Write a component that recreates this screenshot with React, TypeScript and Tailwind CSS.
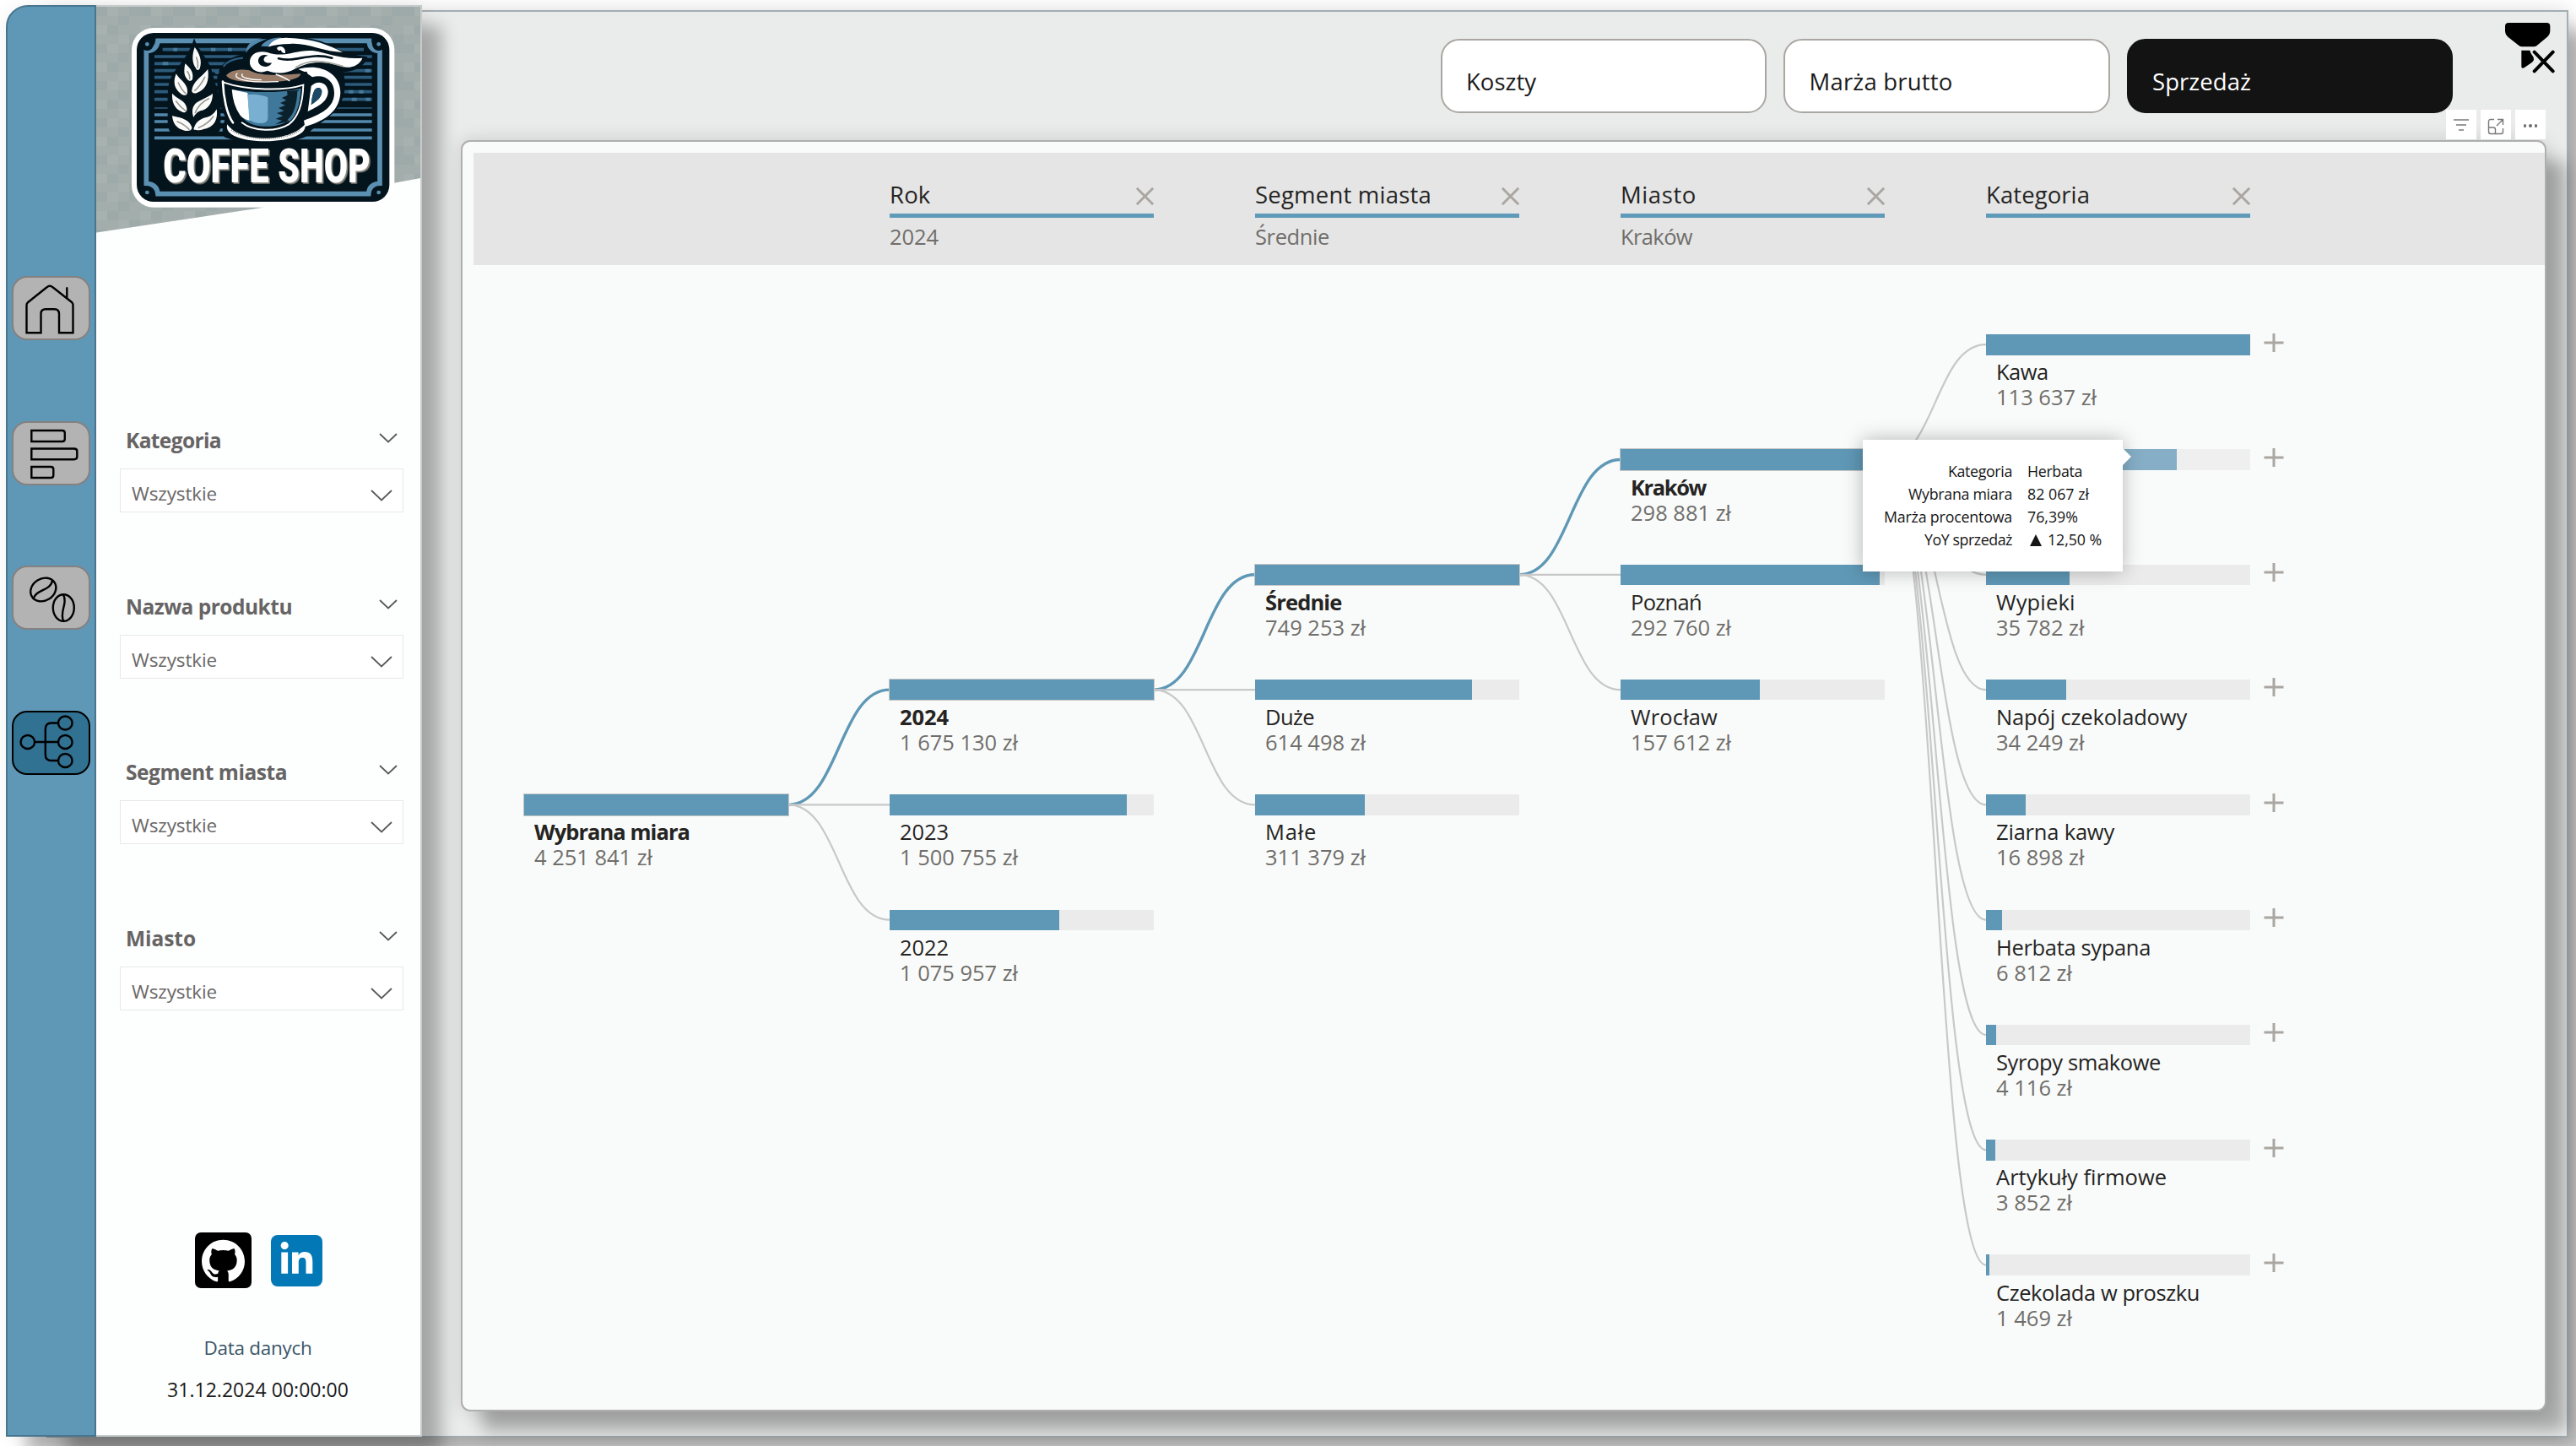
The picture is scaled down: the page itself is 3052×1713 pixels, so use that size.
import React from "react";
import { SiGithub } from "react-icons/si";
import { FaLinkedinIn } from "react-icons/fa";

/* ---------- fitted text ---------- */

const FAMILY = '"Open Sans", "Noto Sans", sans-serif';
let measureCtx: CanvasRenderingContext2D | null = null;

/** Letter spacing that makes `text` take `width` pixels at the given size. */
function tracking(text: string, size: number, weight: number, width: number) {
  if (!measureCtx) measureCtx = document.createElement("canvas").getContext("2d");
  if (!measureCtx) return 0;
  measureCtx.font = `${weight} ${size}px ${FAMILY}`;
  return (width - measureCtx.measureText(text).width) / text.length;
}

type FitProps = { text: string; size: number; width: number; bold?: boolean; className?: string };

function Fit({ text, size, width, bold = false, className = "" }: FitProps) {
  const weight = bold ? 700 : 400;
  return (
    <span
      className={`whitespace-nowrap ${className}`}
      style={{ fontSize: size, fontWeight: weight, letterSpacing: tracking(text, size, weight, width) }}
    >
      {text}
    </span>
  );
}

/* ---------- logo ---------- */

const STRIPES = [92, 117, 142, 167, 191, 216, 242, 269, 300, 324, 348, 378, 406];

function Leaf({ d, shade }: { d: string; shade: string }) {
  return (
    <>
      <path d={d} fill="#fbfbfa" />
      <path d={shade} fill="none" stroke="#9a9a95" strokeWidth="5" strokeLinecap="round" />
    </>
  );
}

function Logo() {
  return (
    <svg viewBox="0 0 972 666" className="block h-[222px] w-[324px]">
      <rect x="18" y="15" width="934" height="638" rx="78" fill="#fff" />
      <rect x="36" y="33" width="898" height="600" rx="60" fill="#04141d" />
      <path
        d="M111 61H862Q862 96 900 98V568Q862 570 860 605H111Q108 570 70 568V98Q108 96 111 61Z"
        fill="none"
        stroke="#5b90b2"
        strokeWidth="17"
      />
      <g fill="#04141d" stroke="#04141d" strokeWidth="6">
        <circle cx="73" cy="73" r="20" />
        <circle cx="896" cy="73" r="20" />
        <circle cx="73" cy="600" r="20" />
        <circle cx="896" cy="600" r="20" />
      </g>
      <g fill="#5b90b2">
        <circle cx="73" cy="73" r="7" />
        <circle cx="896" cy="73" r="7" />
        <circle cx="73" cy="600" r="7" />
        <circle cx="896" cy="600" r="7" />
      </g>
      <g strokeWidth="11">
        {STRIPES.map((y, i) => (
          <path
            key={y}
            d={i === 0 ? `M128 ${y}H843` : `M99 ${y}H872`}
            stroke={i > 8 ? "#5389ad" : "#2c5b7c"}
            strokeWidth={i === 8 ? 4 : 11}
          />
        ))}
      </g>
      <g fill="#5389ad" opacity="0.7">
        <path d="M166 86h14v12h-14zM300 86h16v12h-16zM360 86h14v12h-14zM128 136h20v12h-20zM800 136h16v12h-16zM848 161h18v12h-18zM790 236h16v12h-16zM826 236h16v12h-16zM800 263h18v12h-18zM850 263h16v12h-16z" />
      </g>

      {/* dark halo behind the wheat and the cup */}
      <path d="M240 52C256 100 298 132 306 180C316 220 330 250 334 300V372Q330 392 300 394H170Q146 388 146 350V280C146 220 150 200 170 170C196 140 228 96 240 52Z" fill="#04141d" />
      <path d="M322 190C326 150 360 118 420 108C430 70 470 50 510 44C590 40 690 50 740 86C790 112 830 112 856 118C846 158 800 172 770 172C790 250 760 300 714 336C680 360 650 380 640 400C580 432 420 432 350 404C330 390 350 350 350 330C326 290 322 230 322 190Z" fill="#04141d" />
      <path d="M424 104C424 80 440 62 470 55H500C470 64 440 80 424 104Z" fill="#5389ad" />
      <path d="M478 80C490 60 520 48 550 50L510 82Z" fill="#5389ad" />
      <path d="M560 52C620 50 690 60 724 84Z" fill="#5389ad" />
      <path d="M344 152C358 134 384 124 414 122" fill="none" stroke="#2c5b7c" strokeWidth="7" />
      <circle cx="321" cy="172" r="8" fill="#2c5b7c" />

      {/* wheat */}
      <Leaf d="M242 84C258 104 270 132 260 160C254 168 250 166 246 158C232 140 232 110 242 84Z" shade="M248 120Q256 140 252 156" />
      <Leaf d="M208 142C224 156 240 172 234 198C230 206 220 204 216 198C202 184 204 164 208 142Z" shade="M216 170Q226 184 224 196" />
      <Leaf d="M289 162C294 200 286 232 250 246C240 250 230 246 232 236C236 206 264 192 289 162Z" shade="M278 190Q262 222 242 238" />
      <Leaf d="M176 178C190 202 220 214 216 246C214 258 200 256 192 248C170 232 164 208 176 178Z" shade="M184 210Q194 234 210 248" />
      <Leaf d="M306 248C306 282 290 304 262 310C250 314 238 330 238 334C230 310 234 292 250 280C268 268 290 262 306 248Z" shade="M292 266Q258 282 244 316" />
      <Leaf d="M162 248C176 266 210 272 214 300C216 314 208 320 194 312C170 302 160 276 162 248Z" shade="M176 276Q192 298 210 310" />
      <Leaf d="M320 304C326 340 310 368 276 374C262 380 244 380 238 376C244 352 258 340 280 334C300 330 312 318 320 304Z" shade="M308 330Q290 356 256 370" />
      <Leaf d="M162 328C186 334 220 336 232 368C234 378 220 384 206 380C176 374 164 352 162 328Z" shade="M180 348Q206 358 222 376" />

      {/* saucer */}
      <path d="M358 358C400 424 580 424 634 358C644 392 580 418 494 418C410 418 346 396 358 358Z" fill="#fff" />
      <path d="M372 378C430 420 570 418 618 376" fill="none" stroke="#7c7f7e" strokeWidth="5" strokeDasharray="3 4" />
      <path d="M372 352C420 400 570 400 616 352" fill="none" stroke="#04141d" strokeWidth="16" />

      {/* handle */}
      <path
        fillRule="evenodd"
        d="M610 162C680 140 760 170 760 246C756 320 690 350 634 366L630 344C690 322 738 300 738 246C738 200 700 178 660 190L634 172Z"
        fill="#fff"
      />
      <path
        fillRule="evenodd"
        d="M656 222C676 200 712 206 716 240C716 280 676 296 644 312ZM668 236C660 250 658 270 656 288C676 276 694 262 694 240C692 226 676 224 668 236Z"
        fill="#fff"
      />
      <path d="M668 236C660 250 658 270 656 288C676 276 694 262 694 240C692 226 676 224 668 236Z" fill="#1c4a66" />

      {/* cup */}
      <path d="M338 202C420 240 560 246 640 204C638 270 628 330 586 366C540 392 436 394 396 362C352 330 338 262 338 202Z" fill="#04141d" />
      <path d="M342 206C344 262 356 322 378 352" fill="none" stroke="#fff" strokeWidth="8" strokeLinecap="round" />
      <path d="M342 208C430 238 560 240 628 218C626 290 606 336 576 358C530 386 450 384 410 352" fill="none" stroke="#fff" strokeWidth="6" strokeLinecap="round" />
      <path d="M376 234C450 248 560 246 620 230C616 290 602 328 572 348C530 372 458 372 422 344C390 316 380 280 376 234Z" fill="#3f789b" />
      <path d="M374 234L430 246L438 344Q416 340 404 326Q378 290 374 234Z" fill="#fff" />
      <path d="M430 252Q470 248 502 262V338Q500 356 470 354Q440 350 436 340Z" fill="#79afd0" />
      <path d="M570 240L612 236C610 290 596 330 566 350L528 358L552 344L530 338L556 328L534 318L560 310L540 300L564 290L546 282L568 272L552 264L572 254Z" fill="#04141d" opacity="0.88" />
      <path d="M612 240C610 290 600 324 576 344" fill="none" stroke="#3f789b" strokeWidth="10" />

      {/* coffee */}
      <path d="M344 182C356 160 400 150 440 152C480 190 580 180 640 170C650 186 636 196 620 202C560 222 430 222 380 208C360 202 346 194 344 182Z" fill="#04141d" />
      <path d="M354 184C370 164 410 160 436 166C480 190 560 182 618 178C620 194 580 206 500 208C430 210 366 206 354 184Z" fill="#987c68" />
      <path d="M394 176C370 196 430 212 540 206M412 178C400 192 440 200 480 200M530 180Q560 190 580 204" fill="none" stroke="#fff" strokeWidth="4" />

      {/* steam */}
      <path d="M520 148C500 186 442 176 438 140C436 106 470 94 500 102C560 124 600 92 660 96C720 104 760 128 838 122C830 146 800 160 770 154C700 130 650 134 600 160C560 184 520 176 492 164Z" fill="#fff" />
      <path d="M516 140C504 160 474 156 468 136C466 116 484 106 504 114C486 114 482 134 496 138C506 142 514 138 516 140Z" fill="#04141d" />
      <path d="M504 82C520 54 550 46 590 52C660 56 720 76 768 102C700 100 640 66 580 72C550 72 524 76 504 82Z" fill="#fff" />
      <path d="M534 86C548 74 566 86 564 104C556 108 550 100 548 94C544 98 536 96 534 86Z" fill="#fff" />
      <path d="M540 124C600 140 650 100 730 122" fill="none" stroke="#04141d" strokeWidth="8" strokeLinecap="round" />
      <path d="M600 156C650 124 700 130 770 152" fill="none" stroke="#a9a9a2" strokeWidth="5" />

      <g
        fill="#fff"
        fontFamily='"Roboto", "Liberation Sans", sans-serif'
        fontWeight="900"
        fontSize="168"
        className="drop-shadow-[5px_5px_0_#8f8d82]"
      >
        <text x="130" y="565" textLength="376" lengthAdjust="spacingAndGlyphs">COFFE</text>
        <text x="538" y="565" textLength="328" lengthAdjust="spacingAndGlyphs">SHOP</text>
      </g>
    </svg>
  );
}

function LogoBackdrop() {
  return (
    <svg viewBox="0 0 384 270" className="absolute left-0 top-0 h-[270px] w-[384px]">
      <defs>
        <pattern id="weave" width="52" height="44" patternUnits="userSpaceOnUse">
          <path d="M0 0h13v11H0zM26 11h13v11H26zM13 22h13v11H13zM39 33h13v11H39zM39 0h13v11H39z" fill="#8f9e9e" opacity="0.25" />
          <path d="M13 0h13v11H13zM0 22h13v11H0zM26 33h13v11H26z" fill="#b7bdb8" opacity="0.25" />
        </pattern>
      </defs>
      <path d="M0 0H384V203L193 238.500L0 267.500Z" fill="#a2adac" />
      <path d="M0 0H384V203L193 238.500L0 267.500Z" fill="url(#weave)" />
    </svg>
  );
}

/* ---------- navigation rail ---------- */

const navIcons: { id: string; active?: boolean; icon: React.ReactNode }[] = [
  {
    id: "home",
    icon: (
      <g transform="translate(-0.300 -2.200)">
        <path d="M17 67.5V34.5Q17 32.5 18.8 31.2L41 13.5Q44.5 10.5 48 13.5L70.5 31.2Q72 32.5 72 34.5V67.5H55.5V45Q55.5 39.5 50 39.5H39.5Q34 39.5 34 45V67.5Z" />
        <path d="M64.8 13.5V26" />
      </g>
    ),
  },
  {
    id: "bars",
    icon: (
      <>
        <path d="M22.5 9H59Q62 9 62 12V19Q62 22 59 22H22.5Z" />
        <path d="M22.5 30.500H73Q76.500 30.500 76.500 33.500V40Q76.500 43.200 73 43.200H22.500Z" />
        <path d="M22.5 52H45.500Q48.500 52 48.500 55V62Q48.500 65 45.500 65H22.500Z" />
      </>
    ),
  },
  {
    id: "beans",
    icon: (
      <>
        <ellipse cx="36.500" cy="26.500" rx="15.800" ry="13" transform="rotate(-32 36.500 26.500)" />
        <path d="M24.500 38C28 25 45 29 47.500 15" />
        <ellipse cx="60.500" cy="48" rx="12.500" ry="15.800" />
        <path d="M60 32C66 43 55 53 60.500 64" />
      </>
    ),
  },
  {
    id: "tree",
    active: true,
    icon: (
      <>
        <ellipse cx="18" cy="35" rx="8.300" ry="8" />
        <ellipse cx="62.500" cy="12.500" rx="8.300" ry="8" />
        <ellipse cx="62.500" cy="35" rx="8.300" ry="8" />
        <ellipse cx="62.500" cy="57" rx="8.300" ry="8" />
        <path d="M26.500 35H54M54 12.500H46Q39 12.500 39 20V50Q39 57 46 57H54" />
      </>
    ),
  },
];

function NavRail() {
  return (
    <nav className="flex w-[107px] shrink-0 flex-col gap-[95.500px] rounded-tl-[26px] border-2 border-[#48768f] bg-[#5f98b6] pl-[5px] pt-[319px]">
      {navIcons.map(({ id, active, icon }) => (
        <div
          key={id}
          className={`h-[76px] w-[93px] rounded-[18px] border-2 ${active ? "border-black bg-[#317191]" : "border-[#858180] bg-[#b3b3b3]"}`}
        >
          <svg viewBox="1.200 0 89 72" className="h-[72px] w-[89px]" fill="none" stroke="#000" strokeWidth="2.400">
            {icon}
          </svg>
        </div>
      ))}
    </nav>
  );
}

/* ---------- filter panel ---------- */

const filters = [
  { name: "Kategoria", width: 113 },
  { name: "Nazwa produktu", width: 197 },
  { name: "Segment miasta", width: 191 },
  { name: "Miasto", width: 83 },
];

function FilterPanel() {
  return (
    <aside className="relative flex w-[386px] shrink-0 flex-col border-2 border-l-0 border-[#c9cbcb] bg-[#fdfefe]">
      <LogoBackdrop />
      <div className="relative ml-[36px] mt-[20px] h-[222px]">
        <Logo />
      </div>
      <div className="mt-[257px] flex flex-col pl-[28px]">
        {filters.map((f) => (
          <div key={f.name} className="h-[196.500px]">
            <div className="flex h-[30px] w-[336px] items-start justify-between pl-[7px] pr-[7px]">
              <Fit text={f.name} size={24.5} width={f.width} bold className="leading-[30px] text-[#666464]" />
              <svg viewBox="0 0 22 12" className="mt-[6px] h-[12px] w-[22px]" fill="none" stroke="#5b5a58" strokeWidth="1.800">
                <path d="M1 1L11 10.500L21 1" />
              </svg>
            </div>
            <div className="mt-[18px] flex h-[52px] w-[336px] items-start justify-between border-[1.500px] border-[#e8e8e8] bg-white pl-[13px] pr-[12px]">
              <Fit text="Wszystkie" size={22.5} width={101} className="mt-[14px] leading-[30px] text-[#6a6867]" />
              <svg viewBox="0 0 26 14" className="mt-[24px] h-[14px] w-[26px]" fill="none" stroke="#5b5a58" strokeWidth="1.800">
                <path d="M1 1L13 12.500L25 1" />
              </svg>
            </div>
          </div>
        ))}
      </div>
      <div className="mt-[167px] flex items-center gap-[23px] pl-[116.500px]">
        <div className="flex h-[66px] w-[67px] items-center justify-center rounded-[7px] bg-black">
          <SiGithub className="h-[51px] w-[51px] text-white" />
        </div>
        <div className="flex h-[61px] w-[61px] items-center justify-center rounded-[8px] bg-[#0278b7] pb-[2px]">
          <FaLinkedinIn className="h-[43px] w-[43px] text-white" />
        </div>
      </div>
      <div className="flex w-[383px] flex-col items-center pt-[55.500px]">
        <Fit text="Data danych" size={22.5} width={128} className="leading-[30px] text-[#3a5568]" />
        <Fit text="31.12.2024 00:00:00" size={23} width={215} className="mt-[19px] leading-[30px] text-[#1a1a1a]" />
      </div>
    </aside>
  );
}

/* ---------- top bar ---------- */

const measures = [
  { name: "Koszty", width: 83 },
  { name: "Marża brutto", width: 170 },
  { name: "Sprzedaż", width: 117, active: true },
];

function TopBar() {
  return (
    <header className="relative flex h-[152px] justify-end pr-[14px]">
      <div className="mr-[62px] mt-[32px] flex gap-[20px]">
        {measures.map((m) => (
          <button
            key={m.name}
            className={`flex h-[88px] w-[386.500px] items-start rounded-[22px] border-2 pl-[28.500px] pt-[31px] text-left ${
              m.active ? "border-[#131313] bg-[#131313] text-white" : "border-[#aaa6a2] bg-white text-[#1b1b1b]"
            }`}
          >
            <Fit text={m.name} size={27.5} width={m.width} className="leading-[36px]" />
          </button>
        ))}
      </div>
      <svg viewBox="0 0 180 180" className="mr-[-1px] mt-[13px] h-[60px] w-[60px]">
        <path d="M13 0H148Q160 0 160 12V28Q160 42 150 50L112 82Q108 85 102 85H60Q54 85 50 82L10 50Q0 42 0 28V12Q0 0 13 0Z" fill="#000" />
        <path d="M58 98H88Q90 108 97 116Q104 124 102 132Q100 138 92 143L70 158Q58 165 58 155Z" fill="#000" />
        <path d="M104 104L170 172M170 104L104 172" stroke="#000" strokeWidth="12" strokeLinecap="round" />
      </svg>
      <div className="absolute right-[25px] top-[116px] flex gap-[5px]">
        <span className="flex h-[35px] w-[36px] items-center justify-center bg-white">
          <svg viewBox="0 0 18 14" className="h-[14px] w-[18px]" stroke="#7a7877" strokeWidth="1.500">
            <path d="M0 1H18M3 7H15M6 13H12" />
          </svg>
        </span>
        <span className="flex h-[35px] w-[36px] items-center justify-center bg-white pt-[5px]">
          <svg viewBox="0 0 20 20" className="h-[20px] w-[20px]" fill="none" stroke="#7a7877" strokeWidth="1.400">
            <path d="M8 1.500H4Q1.500 1.500 1.500 4V16Q1.500 18.500 4 18.500H16Q18.500 18.500 18.500 16V12M1.500 11H7Q9.500 11 9.500 13.500V18.500M12 1.500H18.500V8M18.500 1.500L11 9" />
          </svg>
        </span>
        <span className="flex h-[35px] w-[36px] items-center justify-center gap-[3px] bg-white pt-[3px]">
          <i className="size-[3.500px] rounded-full bg-[#6e6c6b]" />
          <i className="size-[3.500px] rounded-full bg-[#6e6c6b]" />
          <i className="size-[3.500px] rounded-full bg-[#6e6c6b]" />
        </span>
      </div>
    </header>
  );
}

/* ---------- decomposition tree ---------- */

const levels = [
  { name: "Rok", width: 48.5, pick: "2024", pickWidth: 58 },
  { name: "Segment miasta", width: 209, pick: "Średnie", pickWidth: 88 },
  { name: "Miasto", width: 90, pick: "Kraków", pickWidth: 85 },
  { name: "Kategoria", width: 123, pick: "", pickWidth: 0 },
];

function LevelHeader() {
  return (
    <div className="ml-[13px] mt-[13px] flex h-[133px] gap-[120px] bg-[#e5e5e5] pl-[493px] pt-[29px]">
      {levels.map((l) => (
        <div key={l.name} className="w-[313px]">
          <div className="flex h-[43px] items-start justify-between">
            <Fit text={l.name} size={27.5} width={l.width} className="mt-px leading-[40px] text-[#252423]" />
            <svg viewBox="0 0 20 20" className="mt-[12px] h-[21px] w-[21px]" fill="none" stroke="#aaa6a2" strokeWidth="2.800">
              <path d="M0.800 0.800L19.200 19.200M19.200 0.800L0.800 19.200" />
            </svg>
          </div>
          <div className="h-[5px] bg-[#5f9ab8]" />
          <div className="mt-[7px] leading-[30px]">
            {l.pick && <Fit text={l.pick} size={25.5} width={l.pickWidth} className="text-[#706e6b]" />}
          </div>
        </div>
      ))}
    </div>
  );
}

type TreeNode = {
  col: number;
  row: number;
  name: string;
  nameWidth: number;
  value: string;
  valueWidth: number;
  bar: number;
  picked?: boolean;
  hover?: boolean;
};

const nodes: TreeNode[] = [
  { col: 0, row: 4, name: "Wybrana miara", nameWidth: 184, value: "4 251 841 zł", valueWidth: 140, bar: 313, picked: true },
  { col: 1, row: 3, name: "2024", nameWidth: 58, value: "1 675 130 zł", valueWidth: 140, bar: 313, picked: true },
  { col: 1, row: 4, name: "2023", nameWidth: 58, value: "1 500 755 zł", valueWidth: 140, bar: 280.5 },
  { col: 1, row: 5, name: "2022", nameWidth: 58, value: "1 075 957 zł", valueWidth: 140, bar: 201 },
  { col: 2, row: 2, name: "Średnie", nameWidth: 90.5, value: "749 253 zł", valueWidth: 119, bar: 313, picked: true },
  { col: 2, row: 3, name: "Duże", nameWidth: 58, value: "614 498 zł", valueWidth: 119, bar: 256.5 },
  { col: 2, row: 4, name: "Małe", nameWidth: 61, value: "311 379 zł", valueWidth: 119, bar: 130 },
  { col: 3, row: 1, name: "Kraków", nameWidth: 89, value: "298 881 zł", valueWidth: 119, bar: 313, picked: true },
  { col: 3, row: 2, name: "Poznań", nameWidth: 84, value: "292 760 zł", valueWidth: 119, bar: 306.5 },
  { col: 3, row: 3, name: "Wrocław", nameWidth: 103, value: "157 612 zł", valueWidth: 119, bar: 165 },
  { col: 4, row: 0, name: "Kawa", nameWidth: 61.5, value: "113 637 zł", valueWidth: 119, bar: 313 },
  { col: 4, row: 1, name: "Herbata", nameWidth: 92, value: "82 067 zł", valueWidth: 104.5, bar: 226, hover: true },
  { col: 4, row: 2, name: "Wypieki", nameWidth: 93.5, value: "35 782 zł", valueWidth: 104.5, bar: 98.5 },
  { col: 4, row: 3, name: "Napój czekoladowy", nameWidth: 226, value: "34 249 zł", valueWidth: 104.5, bar: 94.5 },
  { col: 4, row: 4, name: "Ziarna kawy", nameWidth: 140, value: "16 898 zł", valueWidth: 104.5, bar: 46.5 },
  { col: 4, row: 5, name: "Herbata sypana", nameWidth: 183, value: "6 812 zł", valueWidth: 90, bar: 19 },
  { col: 4, row: 6, name: "Syropy smakowe", nameWidth: 195, value: "4 116 zł", valueWidth: 90, bar: 11.5 },
  { col: 4, row: 7, name: "Artykuły firmowe", nameWidth: 202, value: "3 852 zł", valueWidth: 90, bar: 10.5 },
  { col: 4, row: 8, name: "Czekolada w proszku", nameWidth: 241, value: "1 469 zł", valueWidth: 90, bar: 4 },
];

const colX = (col: number) => 73 + col * 433;
const rowY = (row: number) => 82 + row * 136.3;

function Links() {
  const shapes = nodes
    .filter((n) => n.col > 0)
    .map((n) => {
      const parent = nodes.find((p) => p.picked && p.col === n.col - 1)!;
      const x1 = colX(parent.col) + 313;
      const y1 = rowY(parent.row) + 12.2;
      const x2 = colX(n.col);
      const y2 = rowY(n.row) + 12.2;
      const mx = (x1 + x2) / 2;
      return { key: n.name, picked: !!n.picked, d: `M${x1} ${y1}C${mx} ${y1} ${mx} ${y2} ${x2} ${y2}` };
    })
    .sort((a, b) => Number(b.picked) - Number(a.picked));
  return (
    <svg width="2467" height="1355" className="absolute left-0 top-0" fill="none">
      {shapes.map((s) => (
        <path key={s.key} d={s.d} stroke={s.picked ? "#5f98b6" : "#c8c8c8"} strokeWidth={s.picked ? 3.4 : 2.2} />
      ))}
    </svg>
  );
}

function NodeView({ node }: { node: TreeNode }) {
  return (
    <div className="absolute flex" style={{ left: colX(node.col), top: rowY(node.row) }}>
      <div className="w-[313px]">
        <div className={`h-[24.500px] ${node.hover ? "bg-[#efefef]" : "bg-[#ebebeb]"} ${node.picked ? "outline-[1.500px] outline-[#c8c6c4]" : ""}`}>
          <div className={`h-full ${node.hover ? "bg-[#86afc7]" : "bg-[#5f98b6]"}`} style={{ width: node.bar }} />
        </div>
        {/* the hovered node's labels are covered by its tooltip */}
        {!node.hover && (
          <div className="flex flex-col pl-[12px] pt-[4.800px]">
            <Fit
              text={node.name}
              size={25.5}
              width={node.nameWidth}
              bold={node.picked}
              className="leading-[30px] text-[#252423]"
            />
            <Fit text={node.value} size={25.5} width={node.valueWidth} className="leading-[30px] text-[#706e6b]" />
          </div>
        )}
      </div>
      {node.col === 4 && (
        <svg viewBox="0 0 24 24" className="ml-[16px] mt-[-2.500px] h-[24px] w-[24px]" stroke="#aaa6a2" strokeWidth="3">
          <path d="M0.500 12H23.500M12 1V23" />
        </svg>
      )}
    </div>
  );
}

const details = [
  { label: "Kategoria", labelWidth: 76, value: "Herbata", valueWidth: 65 },
  { label: "Wybrana miara", labelWidth: 123, value: "82 067 zł", valueWidth: 73 },
  { label: "Marża procentowa", labelWidth: 152, value: "76,39%", valueWidth: 60 },
  { label: "YoY sprzedaż", labelWidth: 104, value: "12,50 %", valueWidth: 64, up: true },
];

function Tooltip() {
  return (
    <div className="absolute left-[1659px] top-[207px] h-[156px] w-[308px] bg-white pt-[24px] shadow-[0_0_22px_rgba(0,0,0,0.28)]">
      <div className="absolute right-[-10px] top-[10px] size-0 border-y-[10px] border-l-[10px] border-y-transparent border-l-white" />
      {details.map((d) => (
        <div key={d.label} className="flex h-[27px] items-center gap-[18px] leading-[27px] text-[#161616]">
          <div className="w-[177px] text-right">
            <Fit text={d.label} size={17.8} width={d.labelWidth} />
          </div>
          <div className="flex items-center">
            {d.up && (
              <svg viewBox="0 0 14 14" className="ml-[3px] mr-[7px] h-[14px] w-[14px]">
                <path d="M7 0L14 14H0Z" fill="#161616" />
              </svg>
            )}
            <Fit text={d.value} size={17.8} width={d.valueWidth} />
          </div>
        </div>
      ))}
    </div>
  );
}

function TreeCard() {
  return (
    <section className="ml-[489px] h-[1506px] w-[2471px] rounded-[11px] border-2 border-[#b0aeae] bg-[#f9fbfa] shadow-[24px_24px_20px_rgba(0,0,0,0.28),0_0_22px_rgba(0,0,0,0.14)]">
      <LevelHeader />
      <div className="relative">
        <Links />
        {nodes.map((n) => (
          <NodeView key={n.name} node={n} />
        ))}
        <Tooltip />
      </div>
    </section>
  );
}

/* ---------- page ---------- */

export default function App() {
  return (
    <div className="flex h-[1713px] w-[3052px] overflow-hidden bg-white font-['Open_Sans','Noto_Sans',sans-serif]">
      <div className="relative z-10 ml-[7px] mt-[6px] flex h-[1696px] w-[492px] rounded-tl-[26px] shadow-[24px_24px_20px_rgba(0,0,0,0.28),0_0_22px_rgba(0,0,0,0.06)]">
        <NavRail />
        <FilterPanel />
      </div>
      <main className="ml-[-444px] mt-[12px] h-[1691px] w-[2988px] shrink-0 border-2 border-[#a3adb2] bg-[#eaeceb] shadow-[24px_24px_20px_rgba(0,0,0,0.28),0_0_22px_rgba(0,0,0,0.14)]">
        <TopBar />
        <TreeCard />
      </main>
    </div>
  );
}
